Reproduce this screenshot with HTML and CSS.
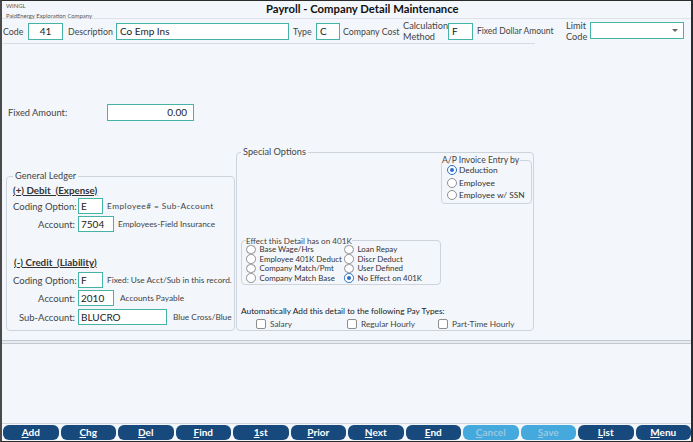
FILE: index.html
```html
<!DOCTYPE html>
<html lang="en">
<head>
<meta charset="utf-8">
<title>Payroll - Company Detail Maintenance</title>
<link rel="stylesheet" href="styles.css">
</head>
<body>
<div class="window">
  <header class="top">
    <div class="app">
      <div>WINGL</div>
      <div>PaldEnergy Exploration Company</div>
    </div>
    <h1 class="title">Payroll - Company Detail Maintenance</h1>
  </header>

  <div class="fieldrow">
    <span class="lbl l-code">Code</span><span class="inp w-code">41</span>
    <span class="lbl l-desc">Description</span><span class="inp w-desc">Co Emp Ins</span>
    <span class="lbl l-type">Type</span><span class="inp w-type">C</span>
    <span class="lbl l-cc">Company Cost</span>
    <span class="lbl two l-calc">Calculation<br>Method</span><span class="inp w-calc">F</span>
    <span class="lbl l-fda">Fixed Dollar Amount</span>
    <span class="lbl two l-limit">Limit<br>Code</span><span class="inp select"><span class="caret"></span></span>
  </div>
  <div class="rule"></div>

  <div class="fixed">
    <span class="lbl l-fixed">Fixed Amount:</span><span class="inp w-fixed">0.00</span>
  </div>

  <div class="panels">
    <fieldset class="box gl">
      <legend>General Ledger</legend>
      <div class="gl-head first">(+) Debit&nbsp; (Expense)</div>
      <div class="gl-row r1"><span class="gl-lab">Coding Option:</span><span class="inp gi w-opt">E</span><span class="aside spaced">Employee# = Sub-Account</span></div>
      <div class="gl-row r2"><span class="gl-lab">Account:</span><span class="inp gi w-acct">7504</span><span class="aside">Employees-Field Insurance</span></div>
      <div class="gl-head second">(-) Credit&nbsp; (Liability)</div>
      <div class="gl-row r3"><span class="gl-lab">Coding Option:</span><span class="inp gi w-opt">F</span><span class="aside">Fixed: Use Acct/Sub in this record.</span></div>
      <div class="gl-row r2"><span class="gl-lab">Account:</span><span class="inp gi w-acct">2010</span><span class="aside wide">Accounts Payable</span></div>
      <div class="gl-row r5"><span class="gl-lab">Sub-Account:</span><span class="inp gi w-sub">BLUCRO</span><span class="aside wide">Blue Cross/Blue Shield</span></div>
    </fieldset>

    <fieldset class="box special">
      <legend>Special Options</legend>
      <fieldset class="box ap">
        <legend>A/P Invoice Entry by</legend>
        <div class="opt"><span class="radio on"></span>Deduction</div>
        <div class="opt"><span class="radio"></span>Employee</div>
        <div class="opt"><span class="radio"></span>Employee w/ SSN</div>
      </fieldset>

      <fieldset class="box k401">
        <legend>Effect this Detail has on 401K</legend>
        <div class="kgrid">
          <div class="kopt"><span class="radio sm"></span>Base Wage/Hrs</div>
          <div class="kopt"><span class="radio sm"></span>Loan Repay</div>
          <div class="kopt"><span class="radio sm"></span>Employee 401K Deduct</div>
          <div class="kopt"><span class="radio sm"></span>Discr Deduct</div>
          <div class="kopt"><span class="radio sm"></span>Company Match/Pmt</div>
          <div class="kopt"><span class="radio sm"></span>User Defined</div>
          <div class="kopt"><span class="radio sm"></span>Company Match Base</div>
          <div class="kopt"><span class="radio sm on"></span>No Effect on 401K</div>
        </div>
      </fieldset>

      <div class="auto">Automatically Add this detail to the following Pay Types:</div>
      <div class="checks">
        <div class="chk"><span class="cbox"></span>Salary</div>
        <div class="chk"><span class="cbox"></span>Regular Hourly</div>
        <div class="chk"><span class="cbox"></span>Part-Time Hourly</div>
      </div>
    </fieldset>
  </div>

  <div class="dbl"></div>
  <div class="fill"></div>

  <nav class="buttons">
    <span class="btn"><u>A</u>dd</span>
    <span class="btn"><u>C</u>hg</span>
    <span class="btn"><u>D</u>el</span>
    <span class="btn"><u>F</u>ind</span>
    <span class="btn"><u>1</u>st</span>
    <span class="btn"><u>P</u>rior</span>
    <span class="btn"><u>N</u>ext</span>
    <span class="btn"><u>E</u>nd</span>
    <span class="btn off"><u>C</u>ancel</span>
    <span class="btn off"><u>S</u>ave</span>
    <span class="btn"><u>L</u>ist</span>
    <span class="btn"><u>M</u>enu</span>
  </nav>
</div>
</body>
</html>
```

FILE: styles.css
```css
* { box-sizing: border-box; }
html, body { margin: 0; padding: 0; }
body {
  width: 693px;
  height: 442px;
  overflow: hidden;
  font-family: Lato, "Noto Sans", sans-serif;
  font-size: 9px;
  color: #3a3a3a;
  background: #f3f7fb;
}
.window {
  width: 693px;
  height: 442px;
  border-top: 1px solid #2b2b2b;
  border-left: 2px solid #4a4a4a;
  border-right: 2px solid #2b2b2b;
  border-bottom: 1px solid #2b2b2b;
  display: flex;
  flex-direction: column;
  background: #f3f7fb;
}

/* header */
.top {
  height: 18px;
  flex: none;
  display: flex;
  align-items: center;
  border-bottom: 1px solid #dde3e9;
}
.app {
  width: 264px;
  padding-left: 4px;
  align-self: flex-start;
  font-size: 5.9px;
  line-height: 9.5px;
  color: #555;
}
.title {
  margin: 0;
  font-size: 11.3px;
  font-weight: bold;
  color: #111;
  line-height: 14px;
  margin-top: -2px;
}

/* field row */
.fieldrow {
  height: 24px;
  flex: none;
  display: flex;
  align-items: center;
  padding-left: 1px;
}
.lbl {
  font-size: 8.8px;
  color: #444;
  white-space: nowrap;
  flex: none;
}
.lbl.two { line-height: 11px; }
.inp {
  flex: none;
  height: 17px;
  border: 1px solid #45b4a6;
  background: #fff;
  font-size: 10px;
  line-height: 15px;
  color: #222;
  padding-left: 3px;
  white-space: nowrap;
  overflow: hidden;
}
.l-code { width: 25px; }
.w-code { width: 35px; text-align: center; padding-left: 0; }
.l-desc { width: 53px; padding-left: 5px; }
.w-desc { width: 173px; }
.l-type { width: 27px; padding-left: 4px; }
.w-type { width: 24px; }
.l-cc { width: 63px; padding-left: 3px; }
.l-calc { width: 45px; margin-top: -1px; font-size: 9.2px; }
.w-calc { width: 25px; }
.l-fda { width: 93px; padding-left: 4px; font-size: 8.5px; }
.l-limit { width: 24px; font-size: 9.2px; }
.select {
  width: 94px;
  height: 17px;
  margin-top: -2px;
  display: flex;
  align-items: center;
  justify-content: flex-end;
  padding-right: 5px;
}
.caret {
  width: 0;
  height: 0;
  border-left: 3px solid transparent;
  border-right: 3px solid transparent;
  border-top: 3px solid #666;
}
.rule {
  height: 1px;
  width: 532px;
  margin-left: 1px;
  background: #d5dbe1;
  flex: none;
}

/* fixed amount */
.fixed {
  margin-top: 60px;
  height: 17px;
  display: flex;
  align-items: center;
  flex: none;
}
.l-fixed { width: 105px; padding-left: 6px; font-size: 9.3px; }
.w-fixed { width: 87px; text-align: right; padding-right: 6px; }

/* panels */
.panels {
  margin-top: 25px;
  display: flex;
  align-items: flex-end;
  padding-left: 4px;
  flex: none;
}
.box {
  margin: 0;
  min-width: 0;
  border: 1px solid #cdd4db;
  border-radius: 4px;
  padding: 0;
}
.box > legend {
  padding: 0 2px;
  font-size: 9.2px;
  line-height: 12px;
  color: #444;
}
.gl {
  width: 229px;
  height: 161px;
  padding-left: 6px;
  overflow: hidden;
}
.gl-head {
  font-size: 9.8px;
  font-weight: bold;
  text-decoration: underline;
  line-height: 12px;
  color: #333;
}
.gl-head.first { margin-top: 2px; }
.gl-head.second { margin-top: 24px; padding-left: 1px; }
.gl-row {
  display: flex;
  align-items: center;
  height: 16px;
  white-space: nowrap;
}
.gl-row.r1 { margin-top: 2px; }
.gl-row.r2 { margin-top: 2px; }
.gl-row.r3 { margin-top: 4px; }
.gl-row.r5 { margin-top: 3px; }
.gl-lab {
  width: 65px;
  padding-right: 3px;
  text-align: right;
  font-size: 9.5px;
  color: #444;
  flex: none;
  white-space: nowrap;
}
.gi { height: 16px; line-height: 14px; padding-left: 2px; }
.w-opt { width: 25px; }
.w-acct { width: 36px; }
.w-sub { width: 89px; }
.aside {
  margin-left: 4px;
  font-size: 8.3px;
  color: #444;
  white-space: nowrap;
}
.aside.spaced { letter-spacing: 0.45px; }
.aside.wide { margin-left: 6px; }

.special {
  width: 298px;
  height: 185px;
  margin-left: 1px;
  padding-left: 4px;
  display: flex;
  flex-direction: column;
}
.ap {
  align-self: flex-end;
  width: 91px;
  margin-right: 1px;
  margin-top: -3px;
  padding: 0 0 1px 5px;
}
.ap > legend {
  margin-left: -5px;
  padding: 0 1px 0 0;
  font-size: 8.6px;
  line-height: 10px;
}
.opt {
  height: 12.5px;
  display: flex;
  align-items: center;
  font-size: 8.4px;
  color: #333;
  white-space: nowrap;
}
.opt:first-of-type { margin-top: -1px; }
.radio {
  width: 10px;
  height: 10px;
  border: 1px solid #8f8f8f;
  border-radius: 50%;
  background: #fff;
  margin-right: 2px;
  flex: none;
  display: flex;
  align-items: center;
  justify-content: center;
}
.radio.on { border-color: #2a6fc4; }
.radio.on::after {
  content: "";
  width: 4px;
  height: 4px;
  border-radius: 50%;
  background: #2a6fc4;
}
.radio.sm { width: 9.5px; height: 9.5px; margin-right: 4px; }

.k401 {
  width: 200px;
  margin-top: 32px;
  padding: 0 0 1px 4px;
}
.k401 > legend {
  padding: 0;
  font-size: 8.1px;
  line-height: 10px;
}
.kgrid {
  display: grid;
  grid-template-columns: 98px 1fr;
  margin-top: -1px;
}
.kopt {
  height: 9.6px;
  display: flex;
  align-items: center;
  font-size: 7.9px;
  color: #333;
  white-space: nowrap;
}
.auto {
  margin-top: 20px;
  font-size: 8.3px;
  line-height: 12px;
  color: #222;
}
.checks {
  margin-top: 2px;
  padding-left: 15px;
  display: grid;
  grid-template-columns: 91px 91px auto;
  height: 12px;
}
.chk {
  display: flex;
  align-items: center;
  font-size: 8.3px;
  color: #444;
  white-space: nowrap;
}
.cbox {
  width: 10px;
  height: 10px;
  border: 1px solid #8d8d8d;
  border-radius: 2px;
  background: #fff;
  margin-right: 4px;
  flex: none;
}

/* separator and buttons */
.dbl {
  flex: none;
  margin-top: 9px;
  height: 4px;
  border-top: 1px solid #c3c9d0;
  border-bottom: 1px solid #c3c9d0;
  background: #e7ebef;
}
.fill { flex: 1; }
.buttons {
  flex: none;
  height: 18px;
  border-top: 1px solid #d0d6dc;
  padding: 1px 0 1px 1px;
  display: flex;
  gap: 2px;
}
.btn {
  flex: 1;
  height: 15px;
  border-radius: 6px;
  background: #17497c;
  color: #fff;
  font-weight: bold;
  font-size: 10px;
  line-height: 15px;
  text-align: center;
}
.btn.off {
  background: #45a9dd;
  color: #98c8e2;
}
```
